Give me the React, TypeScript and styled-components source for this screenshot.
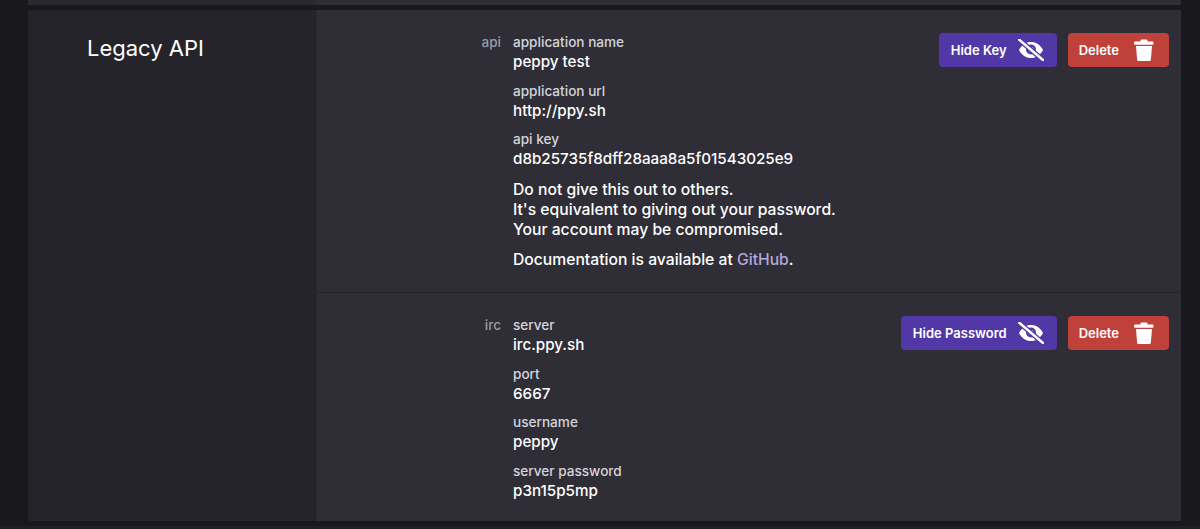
import styled, { createGlobalStyle } from "styled-components";

const Purple = "#5238a6";
const Red = "#c0403a";

const GlobalStyle = createGlobalStyle`
  html, body {
    margin: 0;
    padding: 0;
    background-color: #19181d;
  }
  body {
    font-family: Inter, "Open Sans", sans-serif;
    font-weight: 500;
    color: #fff;
    height: 529px;
    overflow: hidden;
  }
`;

const Shell = styled.div`
  height: 529px;
  display: flex;
  flex-direction: column;
`;

const Main = styled.div`
  flex: 1;
  padding: 0 19px 0 28px;
  display: flex;
  flex-direction: column;
`;

const PreviousSection = styled.div`
  height: 5px;
  flex: none;
  background: linear-gradient(90deg, #2a2930 0 288px, #2f2e37 288px);
  margin-bottom: 5px;
`;

const Section = styled.section`
  display: grid;
  grid-template-columns: 289px 1fr;
  height: 511px;
  flex: none;
`;

const SectionTitle = styled.div`
  background-color: #25242a;
  padding: 20px 0 0 59px;
  font-size: 22px;
  line-height: 36px;
  font-weight: 400;
  border-right: 1px solid #2a2931;
`;

const Body = styled.div`
  background-color: #2f2e37;
  display: flex;
  flex-direction: column;
`;

const Block = styled.div<{ $height: number }>`
  height: ${(p) => p.$height}px;
  box-sizing: border-box;
  display: grid;
  grid-template-columns: 172px 1fr auto;
  padding: 23px 12px 0 12px;
  & + & {
    border-top: 1px solid #25242a;
  }
`;

const BlockLabel = styled.div`
  font-size: 13.5px;
  line-height: 18px;
  color: #9b9aa6;
  text-align: right;
`;

const Fields = styled.div`
  padding-left: 12px;
  display: flex;
  flex-direction: column;
  gap: 9.5px;
`;

const Field = styled.div`
  display: flex;
  flex-direction: column;
`;

const FieldName = styled.div`
  font-size: 13.6px;
  line-height: 18px;
  color: #d5d4dc;
`;

const FieldValue = styled.div`
  font-size: 15.2px;
  line-height: 21px;
  color: #fff;
`;

const Note = styled.p`
  margin: 1.5px 0 0;
  font-size: 15.7px;
  line-height: 20px;
  & + & {
    margin-top: 0.5px;
  }
`;

const DocLink = styled.a`
  color: #b3a6dc;
  text-decoration: none;
`;

const Actions = styled.div`
  display: flex;
  gap: 11px;
  align-items: flex-start;
`;

const Button = styled.button<{ $variant: "primary" | "danger" }>`
  height: 34px;
  border: 0;
  border-radius: 4px;
  padding: ${(p) => (p.$variant === "primary" ? "0 13px 0 12px" : "0 15px 0 11px")};
  display: flex;
  align-items: center;
  gap: ${(p) => (p.$variant === "primary" ? 11 : 15)}px;
  color: #fff;
  font-family: inherit;
  font-size: 13px;
  font-weight: 600;
  background-color: ${(p) => (p.$variant === "primary" ? Purple : Red)};
`;

const FooterBar = styled.div`
  height: 3px;
  flex: none;
  background-color: #201f25;
`;

const HideIcon = () => (
  <svg width="26" height="22" viewBox="0 0 26 22">
    <path d="M1 11C4 5.5 8 3 13 3s9 2.5 12 8c-3 5.5-7 8-12 8S4 16.5 1 11z" fill="#fff" />
    <circle cx="13" cy="10.5" r="5" fill={Purple} />
    <circle cx="13" cy="10.5" r="2.6" fill="#fff" />
    <line x1="1" y1="0.5" x2="25" y2="21" stroke={Purple} strokeWidth="5" />
    <line x1="1" y1="0.5" x2="25" y2="21" stroke="#fff" strokeWidth="2.4" strokeLinecap="round" />
  </svg>
);

const TrashIcon = () => (
  <svg width="20" height="22" viewBox="0 0 20 22">
    <path d="M6.5 1.5a1 1 0 0 1 1-1h5a1 1 0 0 1 1 1V2.5h5a1 1 0 0 1 1 1V5a.8.8 0 0 1-.8.8H.8A.8.8 0 0 1 0 5V3.5a1 1 0 0 1 1-1h5.5z" fill="#fff" />
    <path d="M2 7h16l-1.1 13.4a1.6 1.6 0 0 1-1.6 1.5H4.7a1.6 1.6 0 0 1-1.6-1.5z" fill="#fff" />
  </svg>
);

function App() {
  return (
    <>
      <GlobalStyle />
      <Shell>
        <Main>
          <PreviousSection />
          <Section>
            <SectionTitle>Legacy API</SectionTitle>
            <Body>
              <Block $height={282}>
                <BlockLabel>api</BlockLabel>
                <Fields>
                  <Field>
                    <FieldName>application name</FieldName>
                    <FieldValue>peppy test</FieldValue>
                  </Field>
                  <Field>
                    <FieldName>application url</FieldName>
                    <FieldValue>http://ppy.sh</FieldValue>
                  </Field>
                  <Field>
                    <FieldName>api key</FieldName>
                    <FieldValue>d8b25735f8dff28aaa8a5f01543025e9</FieldValue>
                  </Field>
                  <Note>
                    Do not give this out to others.
                    <br />
                    It's equivalent to giving out your password.
                    <br />
                    Your account may be compromised.
                  </Note>
                  <Note>
                    Documentation is available at <DocLink href="#">GitHub</DocLink>.
                  </Note>
                </Fields>
                <Actions>
                  <Button $variant="primary">
                    Hide Key
                    <HideIcon />
                  </Button>
                  <Button $variant="danger">
                    Delete
                    <TrashIcon />
                  </Button>
                </Actions>
              </Block>
              <Block $height={229}>
                <BlockLabel>irc</BlockLabel>
                <Fields>
                  <Field>
                    <FieldName>server</FieldName>
                    <FieldValue>irc.ppy.sh</FieldValue>
                  </Field>
                  <Field>
                    <FieldName>port</FieldName>
                    <FieldValue>6667</FieldValue>
                  </Field>
                  <Field>
                    <FieldName>username</FieldName>
                    <FieldValue>peppy</FieldValue>
                  </Field>
                  <Field>
                    <FieldName>server password</FieldName>
                    <FieldValue>p3n15p5mp</FieldValue>
                  </Field>
                </Fields>
                <Actions>
                  <Button $variant="primary">
                    Hide Password
                    <HideIcon />
                  </Button>
                  <Button $variant="danger">
                    Delete
                    <TrashIcon />
                  </Button>
                </Actions>
              </Block>
            </Body>
          </Section>
        </Main>
        <FooterBar />
      </Shell>
    </>
  );
}

export default App;
